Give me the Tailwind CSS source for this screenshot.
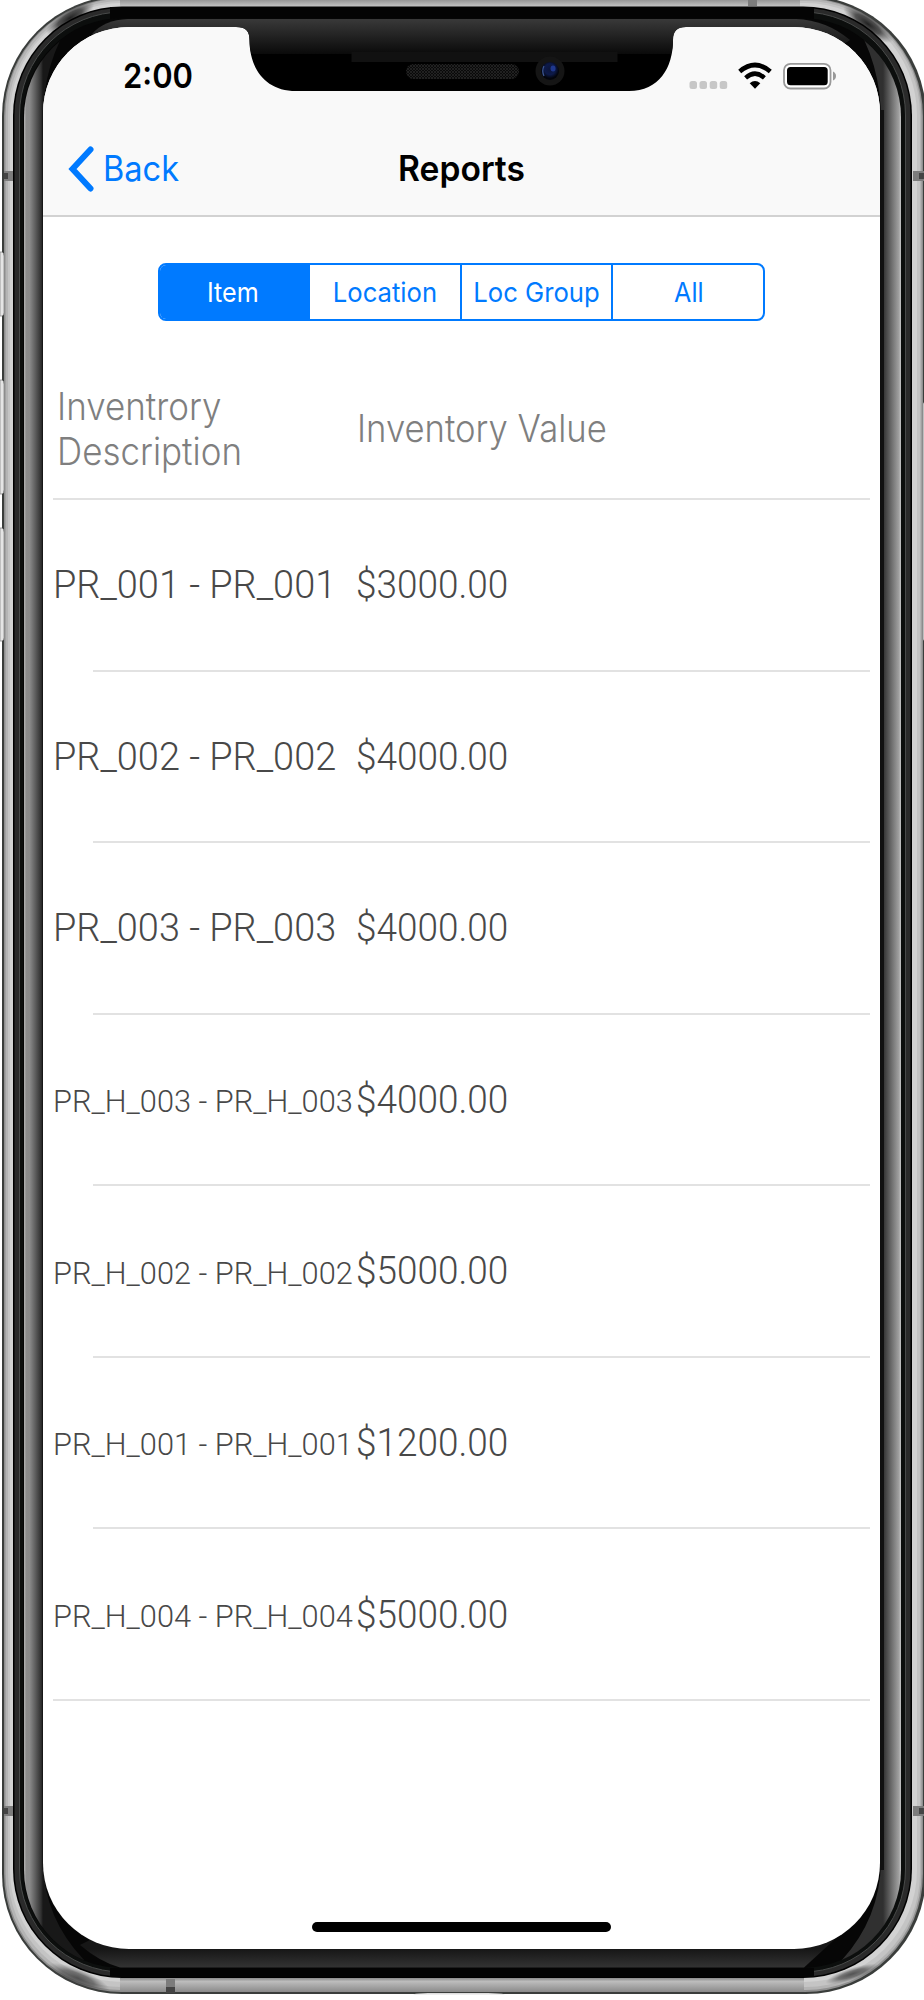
<!DOCTYPE html>
<html lang="en">
<head>
<meta charset="utf-8">
<title>Reports</title>
<script src="https://cdn.jsdelivr.net/npm/@tailwindcss/browser@4"></script>
</head>
<body class="bg-white">
<div class="relative h-[2000px] w-[924px] overflow-hidden font-['Inter',sans-serif]">

  <!-- Phone body -->
  <svg class="absolute inset-0" width="924" height="2000" viewBox="0 0 924 2000" fill="none">
    <defs>
      <linearGradient id="gl" x1="24" x2="43" y1="0" y2="0" gradientUnits="userSpaceOnUse"><stop offset="0" stop-color="#b4b4b4"/><stop offset=".12" stop-color="#8c8c8c"/><stop offset=".3" stop-color="#8a8a8a"/><stop offset=".9" stop-color="#303030"/><stop offset="1" stop-color="#181818"/></linearGradient>
      <linearGradient id="gr" x1="901" x2="883" y1="0" y2="0" gradientUnits="userSpaceOnUse"><stop offset="0" stop-color="#c4c4c4"/><stop offset=".12" stop-color="#a0a0a0"/><stop offset=".5" stop-color="#707070"/><stop offset="1" stop-color="#303030"/></linearGradient>
      <linearGradient id="gt" x1="0" x2="0" y1="19" y2="54" gradientUnits="userSpaceOnUse"><stop offset="0" stop-color="#393939"/><stop offset="1" stop-color="#0a0a0a"/></linearGradient>
      <linearGradient id="gb" x1="0" x2="0" y1="1949" y2="1968" gradientUnits="userSpaceOnUse"><stop offset="0" stop-color="#161616"/><stop offset="1" stop-color="#343434"/></linearGradient>
      <linearGradient id="mt" x1="0" x2="0" y1="0" y2="7" gradientUnits="userSpaceOnUse"><stop offset="0" stop-color="#969696"/><stop offset="1" stop-color="#c8c8c8"/></linearGradient>
      <linearGradient id="mb" x1="0" x2="0" y1="1978" y2="1992" gradientUnits="userSpaceOnUse"><stop offset="0" stop-color="#8c8c8c"/><stop offset=".25" stop-color="#bcbcbc"/><stop offset="1" stop-color="#8a8a8a"/></linearGradient>
      <radialGradient id="dk"><stop offset="0" stop-color="#222"/><stop offset=".5" stop-color="#333" stop-opacity=".8"/><stop offset="1" stop-color="#555" stop-opacity="0"/></radialGradient>
      <clipPath id="body"><rect x="2" y="-4" width="924" height="1998" rx="120"/></clipPath>
      <clipPath id="glass"><rect x="24" y="19" width="877" height="1949" rx="98"/></clipPath>
      <pattern id="mesh" width="3" height="3" patternUnits="userSpaceOnUse"><rect width="3" height="3" fill="#0a0a0a"/><path d="M0 0L3 3M3 0L0 3" stroke="#262626" stroke-width=".8"/></pattern>
      <radialGradient id="lens" cx=".5" cy=".4"><stop offset="0" stop-color="#0c1538"/><stop offset=".6" stop-color="#0d1a4a"/><stop offset="1" stop-color="#03050c"/></radialGradient>
    </defs>
    <rect x="2" y="-4" width="924" height="1998" rx="120" fill="#3a3d3b"/>
    <rect x="4" y="-2" width="919" height="1994" rx="118" fill="#8f8f8f"/>
    <rect x="5.500" y="-1" width="916" height="1991" rx="116" fill="#b4b4b4"/>
    <rect x="8" y="1" width="912" height="1986" rx="114" fill="#c4c4c4"/>
    <rect x="10" y="3" width="907" height="1979" rx="112" fill="#d2d2d2"/>
    <path d="M120 0H800V7H120Z" fill="url(#mt)"/>
    <path d="M120 1978H804V1992H120Z" fill="url(#mb)"/>
    <g clip-path="url(#body)">
      <ellipse cx="70" cy="18" rx="28" ry="9" transform="rotate(-32 70 18)" fill="url(#dk)"/>
      <ellipse cx="868" cy="24" rx="30" ry="9" transform="rotate(36 868 24)" fill="url(#dk)"/>
      <ellipse cx="78" cy="1978" rx="34" ry="9" transform="rotate(22 78 1978)" fill="url(#dk)" opacity=".7"/>
      <ellipse cx="852" cy="1974" rx="28" ry="6" transform="rotate(-18 852 1974)" fill="url(#dk)" opacity=".7"/>
      <path d="M4 171H13V181H4ZM4 1806H13V1816H4ZM913 171H924V181H913ZM913 1806H924V1816H913ZM748 0H757V6H748ZM166 1979H175V1993H166Z" fill="#7c7c7c"/>
      <path d="M4 173H8V179H4ZM4 1808H8V1814H4ZM919 173H924V179H919ZM919 1808H924V1814H919ZM166 1987H175V1993H166Z" fill="#444"/>
    </g>
    <path d="M413 1994.500Q418 1993 428 1993H488Q500 1993 505 1994.500Z" fill="#ddd"/>
    <!-- Side buttons -->
    <path d="M0 252H2Q4 253 4 256V313Q4 315 2 316H0ZM0 380H2Q4 381 4 384V490Q4 493 2 494H0ZM0 528H2Q4 529 4 532V638Q4 640 2 641H0Z" fill="#e4e4e4" stroke="#888" stroke-width=".8"/>
    <path d="M925 403H923V640H925Z" fill="#e4e4e4" stroke="#888" stroke-width=".8"/>
    <!-- Black inner frame -->
    <rect x="13" y="6.500" width="899" height="1971.500" rx="109" fill="#000"/>
    <rect x="14.500" y="8" width="896" height="1968.500" rx="107.500" fill="#2a2a2a"/>
    <rect x="19.500" y="12" width="886" height="1960" rx="103" fill="#0c0e0d" stroke="#484a49"/>
    <path d="M110 7H814V19H110ZM110 1968H814V1977H110Z" fill="#040404"/>
    <rect x="23" y="18" width="878" height="1950" rx="99" fill="#060606"/>
    <g clip-path="url(#glass)">
      <path d="M128 19H796Q826 20 850 40L830 54H94L92 34Q104 20 128 19Z" fill="url(#gt)"/>
      <path d="M90 1940H834L804 1967.500H120Q100 1962 80 1945Z" fill="url(#gb)"/>
      <path d="M24 10H79Q43 56 43 120V1862Q44 1918 84 1960L24 1968Z" fill="url(#gl)"/>
      <path d="M901 10H846Q881 56 881 120V1862Q880 1918 842 1960L901 1968Z" fill="url(#gr)"/>
    </g>
    <path d="M42.500 110H44V1870H42.500ZM880 110H884V1870H880Z" fill="#111"/>
  </svg>

  <!-- Screen -->
  <div class="relative ml-[43px] mt-[27px] flex h-[1922px] w-[837px] flex-col overflow-hidden rounded-[86px] bg-white">
    <header class="flex h-[190px] flex-none flex-col border-b-2 border-[#d2d2d2] bg-[#f9f9f9]">
      <div class="flex h-[94px] items-center justify-between pl-[80px] pr-[41px] pt-[3px]">
        <span class="origin-left scale-x-[.91] text-[34px] leading-none font-semibold">2:00</span>
        <svg width="150" height="30" viewBox="689 60 150 30">
          <g fill="#c7c7c7"><rect x="689.500" y="80" width="7.500" height="8" rx="2.500"/><rect x="699.500" y="80" width="7.500" height="8" rx="2.500"/><rect x="709.700" y="80" width="7.500" height="8" rx="2.500"/><rect x="719.700" y="80" width="7.500" height="8" rx="2.500"/></g>
          <g fill="none" stroke="#000"><path d="M739.700 70.500Q755 57.500 770.300 70.500" stroke-width="4.600"/><path d="M745.600 76.800Q755 68.500 764.400 76.800" stroke-width="4.400"/></g>
          <path d="M749.700 82.300Q755 77.500 760.300 82.300L755 87.700Z"/>
          <rect x="784" y="62.800" width="46.500" height="24.700" rx="6.500" fill="#fff" stroke="#999" stroke-width="1.800"/>
          <rect x="787" y="66" width="40.700" height="18.300" rx="3.500"/>
          <path d="M833 70.500Q836 72 836 75Q836 78 833 79.500Z" fill="#999"/>
        </svg>
      </div>
      <div class="grid h-[94px] grid-cols-3 items-center pt-[1px]">
        <div class="flex items-center text-[#007aff]">
          <svg class="ml-[25px]" width="27" height="46" viewBox="0 0 27 46" fill="none" stroke="#007aff" stroke-width="6" stroke-linecap="round" stroke-linejoin="miter"><path d="M22.500 3.500L4.500 23L22.500 42.500"/></svg>
          <span class="ml-[8px] origin-left scale-x-[.93] text-[35px] leading-none">Back</span>
        </div>
        <h1 class="scale-x-[.96] text-center text-[35px] leading-none font-semibold">Reports</h1>
      </div>
    </header>

    <nav class="ml-[115px] mt-[46px] grid h-[58px] w-[607px] flex-none grid-cols-[150px_151.5px_151.5px_1fr] divide-x-2 divide-[#007aff] overflow-hidden rounded-[8px] border-2 border-[#007aff] text-[27px] leading-none text-[#007aff]">
      <div class="flex items-center justify-center bg-[#007aff] pr-[2px] text-white"><span class="scale-x-[.93]">Item</span></div>
      <div class="flex items-center justify-center"><span class="scale-x-[.95]">Location</span></div>
      <div class="flex items-center justify-center"><span class="scale-x-[.95] whitespace-nowrap">Loc Group</span></div>
      <div class="flex items-center justify-center pl-[2px]"><span class="scale-x-[.93]">All</span></div>
    </nav>

    <div class="mx-[10px] mt-[48px] flex h-[131px] flex-none items-center border-b-2 border-[#e2e2e2] pb-[10px] text-[38.5px] font-light leading-[44.5px] text-[#7f7f7f]">
      <div class="w-[304px] pl-[4px]"><div class="origin-left scale-x-[.908]">Inventrory<br>Description</div></div>
      <div class="origin-left scale-x-[.9]">Inventory Value</div>
    </div>

    <div class="mx-[10px] flex h-[1201px] flex-none flex-col font-['Roboto',sans-serif] text-[39.5px] font-light leading-none text-[#484848]">
      <div class="relative flex flex-1 items-center pb-[2px]"><div class="w-[303px] whitespace-nowrap"><div class="origin-left scale-x-[.96]">PR_001 - PR_001</div></div><div class="origin-left scale-x-[.935]">$3000.00</div><i class="absolute bottom-0 left-[40px] right-0 h-[2px] bg-[#e2e2e2]"></i></div>
      <div class="relative flex flex-1 items-center pb-[2px]"><div class="w-[303px] whitespace-nowrap"><div class="origin-left scale-x-[.96]">PR_002 - PR_002</div></div><div class="origin-left scale-x-[.935]">$4000.00</div><i class="absolute bottom-0 left-[40px] right-0 h-[2px] bg-[#e2e2e2]"></i></div>
      <div class="relative flex flex-1 items-center pb-[2px]"><div class="w-[303px] whitespace-nowrap"><div class="origin-left scale-x-[.96]">PR_003 - PR_003</div></div><div class="origin-left scale-x-[.935]">$4000.00</div><i class="absolute bottom-0 left-[40px] right-0 h-[2px] bg-[#e2e2e2]"></i></div>
      <div class="relative flex flex-1 items-center pb-[2px]"><div class="w-[303px] whitespace-nowrap pt-[4px] text-[31px]"><div class="origin-left scale-x-[.992]">PR_H_003 - PR_H_003</div></div><div class="origin-left scale-x-[.935]">$4000.00</div><i class="absolute bottom-0 left-[40px] right-0 h-[2px] bg-[#e2e2e2]"></i></div>
      <div class="relative flex flex-1 items-center pb-[2px]"><div class="w-[303px] whitespace-nowrap pt-[4px] text-[31px]"><div class="origin-left scale-x-[.992]">PR_H_002 - PR_H_002</div></div><div class="origin-left scale-x-[.935]">$5000.00</div><i class="absolute bottom-0 left-[40px] right-0 h-[2px] bg-[#e2e2e2]"></i></div>
      <div class="relative flex flex-1 items-center pb-[2px]"><div class="w-[303px] whitespace-nowrap pt-[4px] text-[31px]"><div class="origin-left scale-x-[.992]">PR_H_001 - PR_H_001</div></div><div class="origin-left scale-x-[.935]">$1200.00</div><i class="absolute bottom-0 left-[40px] right-0 h-[2px] bg-[#e2e2e2]"></i></div>
      <div class="relative flex flex-1 items-center pb-[2px]"><div class="w-[303px] whitespace-nowrap pt-[4px] text-[31px]"><div class="origin-left scale-x-[.992]">PR_H_004 - PR_H_004</div></div><div class="origin-left scale-x-[.935]">$5000.00</div><i class="absolute bottom-0 left-0 right-0 h-[2px] bg-[#e2e2e2]"></i></div>
    </div>

    <div class="mb-[17px] ml-[269px] mt-auto h-[10px] w-[299px] flex-none rounded-full bg-black"></div>
  </div>

  <!-- Notch -->
  <svg class="absolute left-[230px] top-[18px]" width="460" height="76" viewBox="230 18 460 76">
    <path d="M230 27H236C246 27 249.500 31 249.500 40C249.500 68 265 91 296 91H629C659 91 673 68 673 40C673 31 677 27 686 27V19H230Z" fill="#000"/>
    <path d="M230 27H236C246 27 249.500 31 249.500 40Q249.500 48 251.500 54H671Q673 48 673 40C673 31 677 27 686 27V19H230Z" fill="url(#gt)"/>
    <rect x="351.500" y="52" width="266" height="10" fill="#111"/>
    <rect x="406" y="64" width="113" height="15" rx="7.500" fill="url(#mesh)"/>
    <circle cx="550" cy="71" r="14.500" fill="#151515"/>
    <circle cx="550" cy="71" r="9" fill="url(#lens)"/>
    <ellipse cx="553" cy="68.500" rx="2.500" ry="3" fill="#2440a0" opacity=".8"/>
    <path d="M544 66Q541.500 71 544 76" stroke="#3b5590" stroke-width="1.300" fill="none"/>
  </svg>
</div>
</body>
</html>
